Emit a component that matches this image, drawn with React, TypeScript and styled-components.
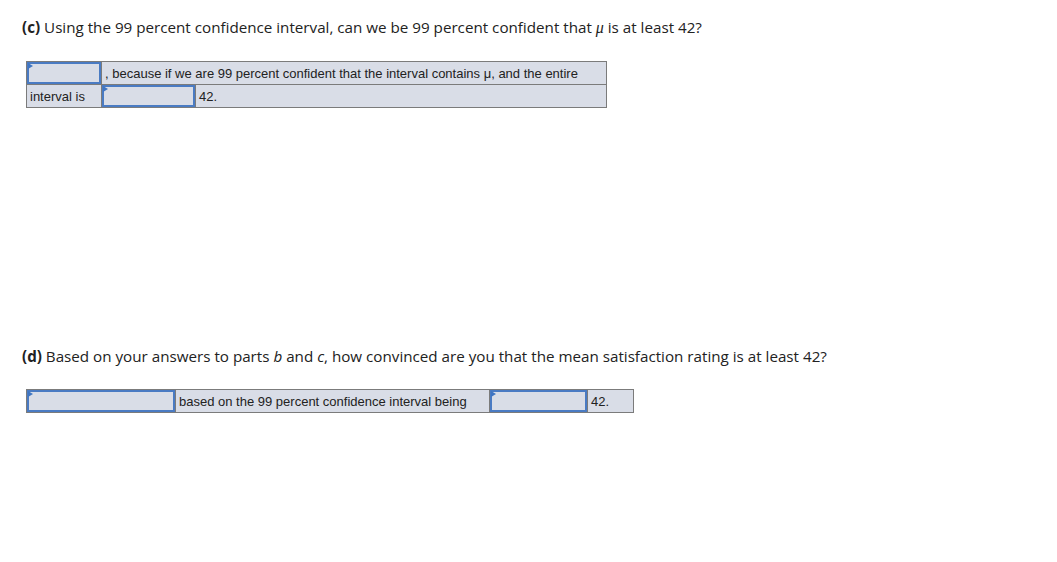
import React from 'react';
import styled, { createGlobalStyle } from 'styled-components';

const Global = createGlobalStyle`
    * {
        box-sizing: border-box;
    }

    body {
        margin: 0;
        background: #fff;
        color: #222;
    }
`

const Page = styled.div`
    padding: 17px 0 0 22px;
`

const Question = styled.p<{ $top?: number; $gap: number }>`
    font-family: 'Open Sans', sans-serif;
    font-size: 15.2px;
    line-height: 20px;
    margin: ${p => p.$top || 0}px 0 ${p => p.$gap}px 0;
    color: #222;

    b {
        font-weight: 700;
    }

    i {
        font-style: italic;
    }
`

const Mu = styled.span`
    font-family: 'Liberation Serif', serif;
    font-style: italic;
    font-size: 16px;
    line-height: 0;
`

// the answer grid: gray outer frame, rows split by gray lines
const Grid = styled.div<{ $w: number }>`
    width: ${p => p.$w}px;
    margin-left: 4px;
    border: 1px solid #7b7b7b;
    background: #d9dde7;
    font-family: 'Liberation Sans', Arial, sans-serif;
    font-size: 13px;
    color: #222;
`

const Row = styled.div`
    display: flex;
    height: 22px;

    & + & {
        height: 23px;
        border-top: 1px solid #7b7b7b;
    }

    & > * + * {
        border-left: 1px solid #7b7b7b;
    }
`

const Cell = styled.div<{ $w?: number }>`
    display: flex;
    align-items: center;
    padding: 0 3px;
    white-space: nowrap;
    overflow: hidden;
    ${p => (p.$w ? `width: ${p.$w}px; flex: none;` : 'flex: 1;')}
`

const Select = styled.div<{ $w: number }>`
    position: relative;
    flex: none;
    width: ${p => p.$w}px;
    height: 100%;
    box-shadow: inset 0 0 0 2px #4a7bc3;

    &::before {
        content: '';
        position: absolute;
        left: 1px;
        top: 1px;
        border-top: 3px solid transparent;
        border-bottom: 3px solid transparent;
        border-left: 5px solid #3f75c2;
    }
`

export default function App() {
    return (
        <Page>
            <Global />
            <Question $gap={24}>
                <b>(c)</b> Using the 99 percent confidence interval, can we be 99 percent confident that <Mu>μ</Mu> is at least 42?
            </Question>

            <Grid $w={581}>
                <Row>
                    <Select $w={74} />
                    <Cell>, because if we are 99 percent confident that the interval contains μ, and the entire</Cell>
                </Row>
                <Row>
                    <Cell $w={74}>interval is</Cell>
                    <Select $w={94} />
                    <Cell>42.</Cell>
                </Row>
            </Grid>

            <Question $top={238} $gap={23}>
                <b>(d)</b> Based on your answers to parts <i>b</i> and <i>c</i>, how convinced are you that the mean satisfaction rating is at least 42?
            </Question>

            <Grid $w={608}>
                <Row>
                    <Select $w={148} />
                    <Cell $w={314}>based on the 99 percent confidence interval being</Cell>
                    <Select $w={98} />
                    <Cell>42.</Cell>
                </Row>
            </Grid>
        </Page>
    );
}
